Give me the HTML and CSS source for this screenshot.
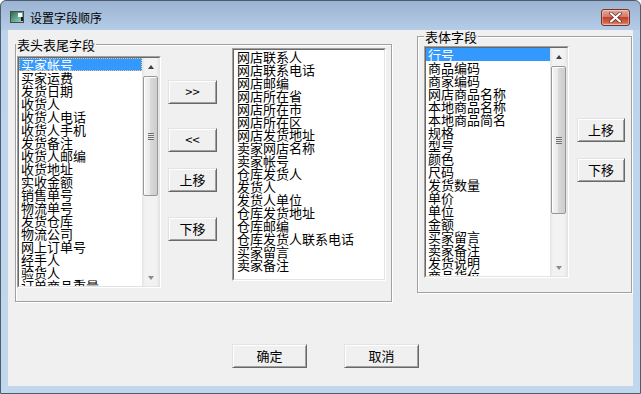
FILE: index.html
```html
<!DOCTYPE html>
<html>
<head>
    <title>设置字段顺序</title>
    <meta charset="utf-8">
    <link rel="stylesheet" href="styles.css">
</head>
<body>
    <div class="window">
        <!-- Barra de título -->
        <div class="titlebar">
            <svg class="title-icon" width="14" height="12" viewBox="0 0 14 12">
                <defs>
                    <linearGradient id="ig" x1="0" y1="0" x2="1" y2="1">
                        <stop offset="0" stop-color="#1f6a4c"/>
                        <stop offset="1" stop-color="#a9dccd"/>
                    </linearGradient>
                </defs>
                <rect x="0.5" y="0.5" width="13" height="11" fill="url(#ig)" stroke="#4a4a4a"/>
                <rect x="8" y="2" width="4" height="4" fill="#fff"/>
                <rect x="11" y="6" width="2" height="4" fill="#1a1a1a"/>
            </svg>
            <span class="title-text">设置字段顺序</span>
            <div class="close-btn">
                <svg width="13" height="11" viewBox="0 0 13 11">
                    <path d="M2 1.5 L11 9.5 M11 1.5 L2 9.5" stroke="#5a2a22" stroke-width="3.6" stroke-linecap="round"/>
                    <path d="M2 1.5 L11 9.5 M11 1.5 L2 9.5" stroke="#fff" stroke-width="2.2" stroke-linecap="round"/>
                </svg>
            </div>
        </div>

        <div class="client">
            <div class="top-row">
                <!-- Cabeçalho / rodapé -->
                <div class="group group-head">
                    <div class="group-title">表头表尾字段</div>
                    <div class="group-body">
                        <div class="listbox list-left">
                            <div class="listbox-inner">
                                <div class="items">
                                    <div class="item selected focus">买家帐号</div>
                                    <div class="item">买家运费</div>
                                    <div class="item">发货日期</div>
                                    <div class="item">收货人</div>
                                    <div class="item">收货人电话</div>
                                    <div class="item">收货人手机</div>
                                    <div class="item">发货备注</div>
                                    <div class="item">收货人邮编</div>
                                    <div class="item">收货地址</div>
                                    <div class="item">实收金额</div>
                                    <div class="item">销售单号</div>
                                    <div class="item">物流单号</div>
                                    <div class="item">发货仓库</div>
                                    <div class="item">物流公司</div>
                                    <div class="item">网上订单号</div>
                                    <div class="item">经手人</div>
                                    <div class="item">验货人</div>
                                    <div class="item">订单商品重量</div>
                                </div>
                                <div class="scrollbar">
                                    <div class="sb-arrow"><span class="tri-up"></span></div>
                                    <div class="sb-track">
                                        <div class="sb-thumb thumb-left"><span class="grip"></span></div>
                                    </div>
                                    <div class="sb-arrow"><span class="tri-down"></span></div>
                                </div>
                            </div>
                        </div>

                        <div class="move-buttons">
                            <button class="btn btn-add">&gt;&gt;</button>
                            <button class="btn btn-remove">&lt;&lt;</button>
                            <button class="btn btn-up">上移</button>
                            <button class="btn btn-down">下移</button>
                        </div>

                        <div class="listbox list-middle">
                            <div class="listbox-inner">
                                <div class="items">
                                    <div class="item">网店联系人</div>
                                    <div class="item">网店联系电话</div>
                                    <div class="item">网店邮编</div>
                                    <div class="item">网店所在省</div>
                                    <div class="item">网店所在市</div>
                                    <div class="item">网店所在区</div>
                                    <div class="item">网店发货地址</div>
                                    <div class="item">卖家网店名称</div>
                                    <div class="item">卖家帐号</div>
                                    <div class="item">仓库发货人</div>
                                    <div class="item">发货人</div>
                                    <div class="item">发货人单位</div>
                                    <div class="item">仓库发货地址</div>
                                    <div class="item">仓库邮编</div>
                                    <div class="item">仓库发货人联系电话</div>
                                    <div class="item">买家留言</div>
                                    <div class="item">卖家备注</div>
                                </div>
                            </div>
                        </div>
                    </div>
                </div>

                <!-- Corpo -->
                <div class="group group-body-fields">
                    <div class="group-title">表体字段</div>
                    <div class="group-body">
                        <div class="listbox list-right">
                            <div class="listbox-inner">
                                <div class="items">
                                    <div class="item selected">行号</div>
                                    <div class="item">商品编码</div>
                                    <div class="item">商家编码</div>
                                    <div class="item">网店商品名称</div>
                                    <div class="item">本地商品名称</div>
                                    <div class="item">本地商品简名</div>
                                    <div class="item">规格</div>
                                    <div class="item">型号</div>
                                    <div class="item">颜色</div>
                                    <div class="item">尺码</div>
                                    <div class="item">发货数量</div>
                                    <div class="item">单价</div>
                                    <div class="item">单位</div>
                                    <div class="item">金额</div>
                                    <div class="item">买家留言</div>
                                    <div class="item">卖家备注</div>
                                    <div class="item">发货说明</div>
                                    <div class="item">商品货位</div>
                                </div>
                                <div class="scrollbar">
                                    <div class="sb-arrow"><span class="tri-up"></span></div>
                                    <div class="sb-track">
                                        <div class="sb-thumb thumb-right"><span class="grip"></span></div>
                                    </div>
                                    <div class="sb-arrow"><span class="tri-down"></span></div>
                                </div>
                            </div>
                        </div>

                        <div class="side-buttons">
                            <button class="btn btn-side-up">上移</button>
                            <button class="btn btn-side-down">下移</button>
                        </div>
                    </div>
                </div>
            </div>

            <div class="actions">
                <button class="btn btn-wide">确定</button>
                <button class="btn btn-wide">取消</button>
            </div>
        </div>
    </div>
</body>
</html>
```

FILE: styles.css
```css
body {
    margin: 0;
    padding: 0;
    font-family: "Noto Sans CJK SC", sans-serif;
    font-size: 13px;
    color: #000;
}

.window {
    width: 641px;
    height: 394px;
    box-sizing: border-box;
    border: 1px solid #4e5c6c;
    border-radius: 6px 6px 0 0;
    background: linear-gradient(#9bb4d3, #b5cce6 29px, #bcd3eb 29px, #c1d7ee);
    padding: 0 7px 7px;
    display: flex;
    flex-direction: column;
}

/* barra de título */
.titlebar {
    height: 29px;
    display: flex;
    align-items: flex-start;
}

.title-icon {
    margin: 10px 0 0 2px;
}

.title-text {
    margin: 9px 0 0 6px;
    font-size: 12px;
    line-height: 16px;
}

.close-btn {
    margin: 8px 3px 0 auto;
    width: 29px;
    height: 17px;
    box-sizing: border-box;
    border: 1px solid #7a3127;
    border-radius: 3px;
    background: linear-gradient(#e9a99b, #d47a66 45%, #c2412f 50%, #cf6a50 85%, #e0a08a);
    box-shadow: inset 0 0 0 1px rgba(255, 255, 255, 0.35);
    display: flex;
    align-items: center;
    justify-content: center;
}

.client {
    flex: 1;
    background: #f0f0f0;
}

.top-row {
    display: flex;
    align-items: flex-start;
}

/* caixas de grupo */
.group {
    box-sizing: border-box;
    border: 1px solid #a0a0a0;
    box-shadow: inset 1px 1px 0 #fff, 1px 1px 0 #fff;
}

.group-title {
    width: max-content;
    margin: -7px 0 -6px 0;
    padding: 0 1px;
    line-height: 13px;
    background: #f0f0f0;
}

.group-head {
    margin: 14px 0 0 7px;
    width: 377px;
    height: 258px;
}

.group-body-fields {
    margin: 6px 0 0 25px;
    width: 215px;
    height: 257px;
}

.group-body-fields .group-title {
    margin-left: 6px;
}

.group-body {
    display: flex;
    align-items: flex-start;
}

/* listas */
.listbox {
    box-sizing: border-box;
    border: 1px solid;
    border-color: #a0a0a0 #fff #fff #a0a0a0;
}

.listbox-inner {
    height: 100%;
    box-sizing: border-box;
    border: 1px solid;
    border-color: #696969 #e3e3e3 #e3e3e3 #696969;
    background: #fff;
    display: flex;
}

.list-left {
    margin: 11px 0 0 1px;
    width: 144px;
    height: 232px;
}

.list-middle {
    margin: 3px 0 0 15px;
    width: 154px;
    height: 233px;
}

.list-right {
    margin: 9px 0 0 6px;
    width: 145px;
    height: 232px;
}

.items {
    flex: 1;
    overflow: hidden;
}

.item {
    height: 13px;
    line-height: 13px;
    padding-left: 2px;
    white-space: nowrap;
}

.list-middle .item {
    padding-left: 3px;
}

.item.selected {
    background: #3399ff;
    color: #fff;
}

.item.focus {
    outline: 1px dotted #f5c27a;
    outline-offset: -1px;
}

/* barra de rolagem */
.scrollbar {
    width: 17px;
    display: flex;
    flex-direction: column;
    background: linear-gradient(to right, #e3e3e3, #f2f2f2 3px, #f2f2f2 14px, #e6e6e6);
}

.sb-arrow {
    height: 17px;
    display: flex;
    align-items: center;
    justify-content: center;
}

.tri-up {
    width: 0;
    height: 0;
    border-left: 3.5px solid transparent;
    border-right: 3.5px solid transparent;
    border-bottom: 4px solid #404040;
}

.tri-down {
    width: 0;
    height: 0;
    border-left: 3.5px solid transparent;
    border-right: 3.5px solid transparent;
    border-top: 4px solid #8c8c8c;
}

.sb-track {
    flex: 1;
    padding-top: 1px;
}

.sb-thumb {
    box-sizing: border-box;
    margin: 0 1px;
    border: 1px solid #979797;
    border-radius: 2px;
    background: linear-gradient(to right, #f4f4f4, #e8e8e8 50%, #d9d9d9 50%, #cdcdcd);
    box-shadow: inset 1px 1px 0 #fff;
    display: flex;
    align-items: center;
    justify-content: center;
}

.thumb-left {
    height: 120px;
}

.thumb-right {
    height: 148px;
}

.grip {
    width: 6px;
    height: 7px;
    background: repeating-linear-gradient(#6e6e6e 0, #6e6e6e 1px, #e8e8e8 1px, #e8e8e8 2px);
}

/* botões */
.btn {
    display: block;
    padding: 0;
    margin: 0;
    box-sizing: border-box;
    height: 24px;
    font-family: "Noto Sans CJK SC", sans-serif;
    font-size: 13px;
    line-height: 20px;
    color: #000;
    background: #f0f0f0;
    border: 1px solid;
    border-color: #e3e3e3 #696969 #696969 #e3e3e3;
    box-shadow: inset 1px 1px 0 #fff, inset -1px -1px 0 #a0a0a0;
}

.move-buttons {
    margin: 35px 0 0 7px;
    display: flex;
    flex-direction: column;
}

.move-buttons .btn {
    width: 49px;
}

.btn-remove {
    margin-top: 24px;
}

.btn-up {
    margin-top: 16px;
}

.btn-down {
    margin-top: 25px;
}

.side-buttons {
    margin: 81px 0 0 8px;
    display: flex;
    flex-direction: column;
}

.side-buttons .btn {
    width: 48px;
}

.btn-side-down {
    margin-top: 16px;
}

.actions {
    display: flex;
    gap: 37px;
    margin-top: 42px;
    padding-left: 224px;
}

.btn-wide {
    width: 75px;
}
```
